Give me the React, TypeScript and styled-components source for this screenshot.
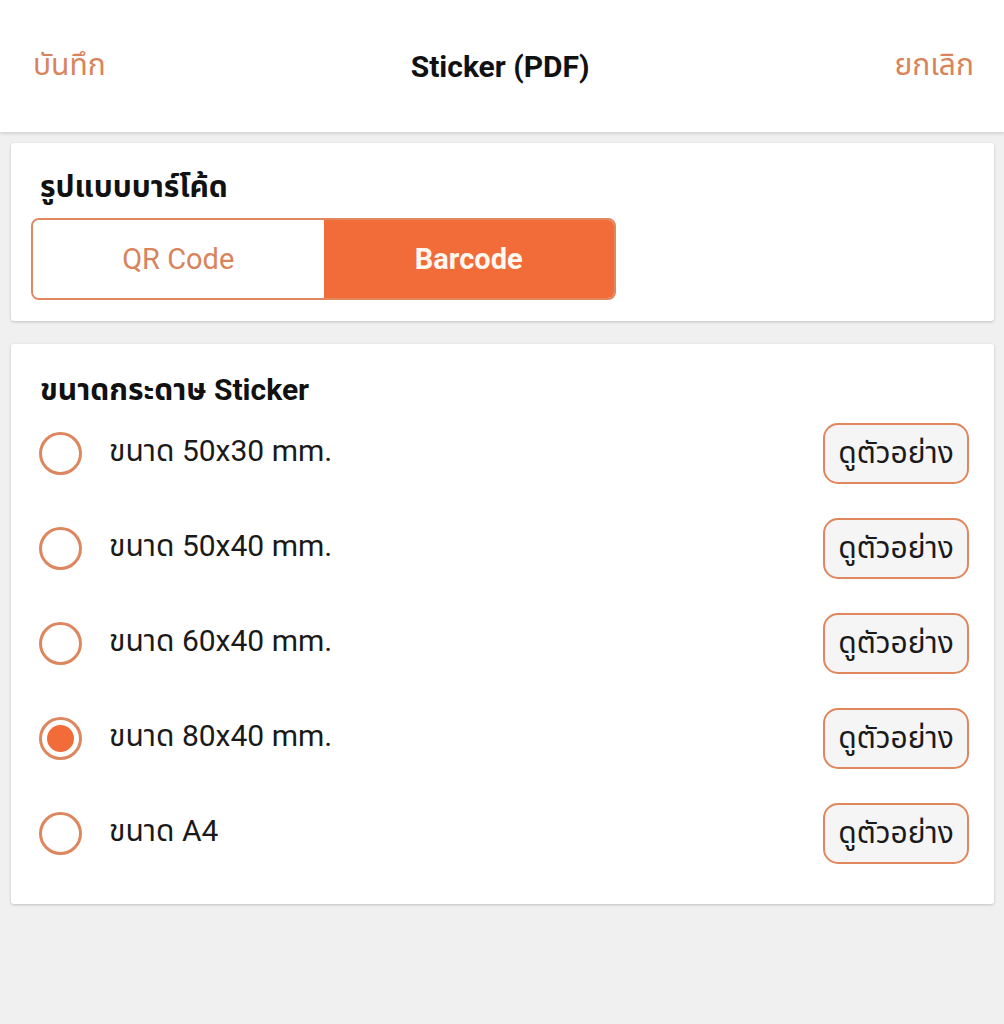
import React, { useState } from "react";
import styled, { createGlobalStyle } from "styled-components";

const Global = createGlobalStyle`
  html, body { margin: 0; padding: 0; background: #f0f0f0; }
  body { font-family: Roboto, "Noto Sans", "Noto Sans Thai", "DejaVu Sans", sans-serif; }
  * { box-sizing: border-box; }
`;

const Page = styled.div`
  width: 1004px;
  height: 1024px;
  background: #f0f0f0;
  display: flex;
  flex-direction: column;
`;

const Header = styled.header`
  height: 132px;
  background: #ffffff;
  display: flex;
  align-items: center;
  justify-content: space-between;
  padding: 0 30px 0 33px;
  box-shadow: 0 2px 3px rgba(0, 0, 0, 0.12);
  position: relative;
  z-index: 1;
`;

const HeaderAction = styled.button`
  background: none;
  border: none;
  padding: 0;
  font-family: inherit;
  font-size: 30px;
  color: #d8845c;
  cursor: pointer;
`;

const HeaderTitle = styled.h1`
  margin: 0;
  font-size: 30px;
  font-weight: 700;
  color: #111;
`;

const Content = styled.main`
  padding: 11px 10px 0 11px;
  display: flex;
  flex-direction: column;
  gap: 23px;
`;

const Card = styled.section<{ $pad: string }>`
  background: #fff;
  border-radius: 3px;
  box-shadow: 0 1px 3px rgba(0, 0, 0, 0.2);
  padding: ${(p) => p.$pad};
`;

const CardTitle = styled.h2<{ $indent?: number }>`
  margin: 0;
  font-size: 30px;
  line-height: 32px;
  font-weight: 700;
  color: #111;
  padding-left: ${(p) => p.$indent ?? 0}px;
`;

const Segmented = styled.div`
  margin-top: 15px;
  width: 585px;
  height: 82px;
  display: flex;
  border: 2px solid #e0875d;
  border-radius: 8px;
  overflow: hidden;
`;

const Segment = styled.button<{ $active: boolean }>`
  flex: 1;
  border: none;
  font-family: inherit;
  font-size: 29px;
  font-weight: ${(p) => (p.$active ? 700 : 400)};
  background: ${(p) => (p.$active ? "#f26c3a" : "#ffffff")};
  color: ${(p) => (p.$active ? "#fff8f0" : "#d8845c")};
  cursor: pointer;
`;

const Row = styled.div`
  height: 95px;
  display: flex;
  align-items: center;
`;

const Radio = styled.span<{ $checked: boolean }>`
  width: 43px;
  height: 43px;
  border-radius: 50%;
  border: 3px solid #dc875f;
  display: flex;
  align-items: center;
  justify-content: center;
  flex-shrink: 0;
  &::after {
    content: "";
    width: 27px;
    height: 27px;
    border-radius: 50%;
    background: ${(p) => (p.$checked ? "#f26c3a" : "transparent")};
  }
`;

const Label = styled.span`
  margin-left: 27px;
  flex: 1;
  font-size: 30px;
  color: #1a1a1a;
  padding-bottom: 4px;
`;

const PreviewButton = styled.button`
  width: 146px;
  height: 61px;
  border: 2px solid #e0875d;
  border-radius: 15px;
  background: #f5f5f5;
  font-family: inherit;
  font-size: 30px;
  color: #1a1a1a;
  padding: 0;
  cursor: pointer;
`;

const sizes = ["ขนาด 50x30 mm.", "ขนาด 50x40 mm.", "ขนาด 60x40 mm.", "ขนาด 80x40 mm.", "ขนาด A4"];

export default function App() {
  const [mode, setMode] = useState<"qr" | "bar">("bar");
  const [selected, setSelected] = useState(3);
  return (
    <Page>
      <Global />
      <Header>
        <HeaderAction>บันทึก</HeaderAction>
        <HeaderTitle>Sticker (PDF)</HeaderTitle>
        <HeaderAction>ยกเลิก</HeaderAction>
      </Header>
      <Content>
        <Card $pad="28px 20px 21px 20px">
          <CardTitle $indent={9}>รูปแบบบาร์โค้ด</CardTitle>
          <Segmented>
            <Segment $active={mode === "qr"} onClick={() => setMode("qr")}>QR Code</Segment>
            <Segment $active={mode === "bar"} onClick={() => setMode("bar")}>Barcode</Segment>
          </Segmented>
        </Card>
        <Card $pad="30px 25px 23px 28px">
          <CardTitle $indent={1}>ขนาดกระดาษ Sticker</CardTitle>
          {sizes.map((s, i) => (
            <Row key={s} onClick={() => setSelected(i)}>
              <Radio $checked={selected === i} />
              <Label>{s}</Label>
              <PreviewButton>ดูตัวอย่าง</PreviewButton>
            </Row>
          ))}
        </Card>
      </Content>
    </Page>
  );
}
